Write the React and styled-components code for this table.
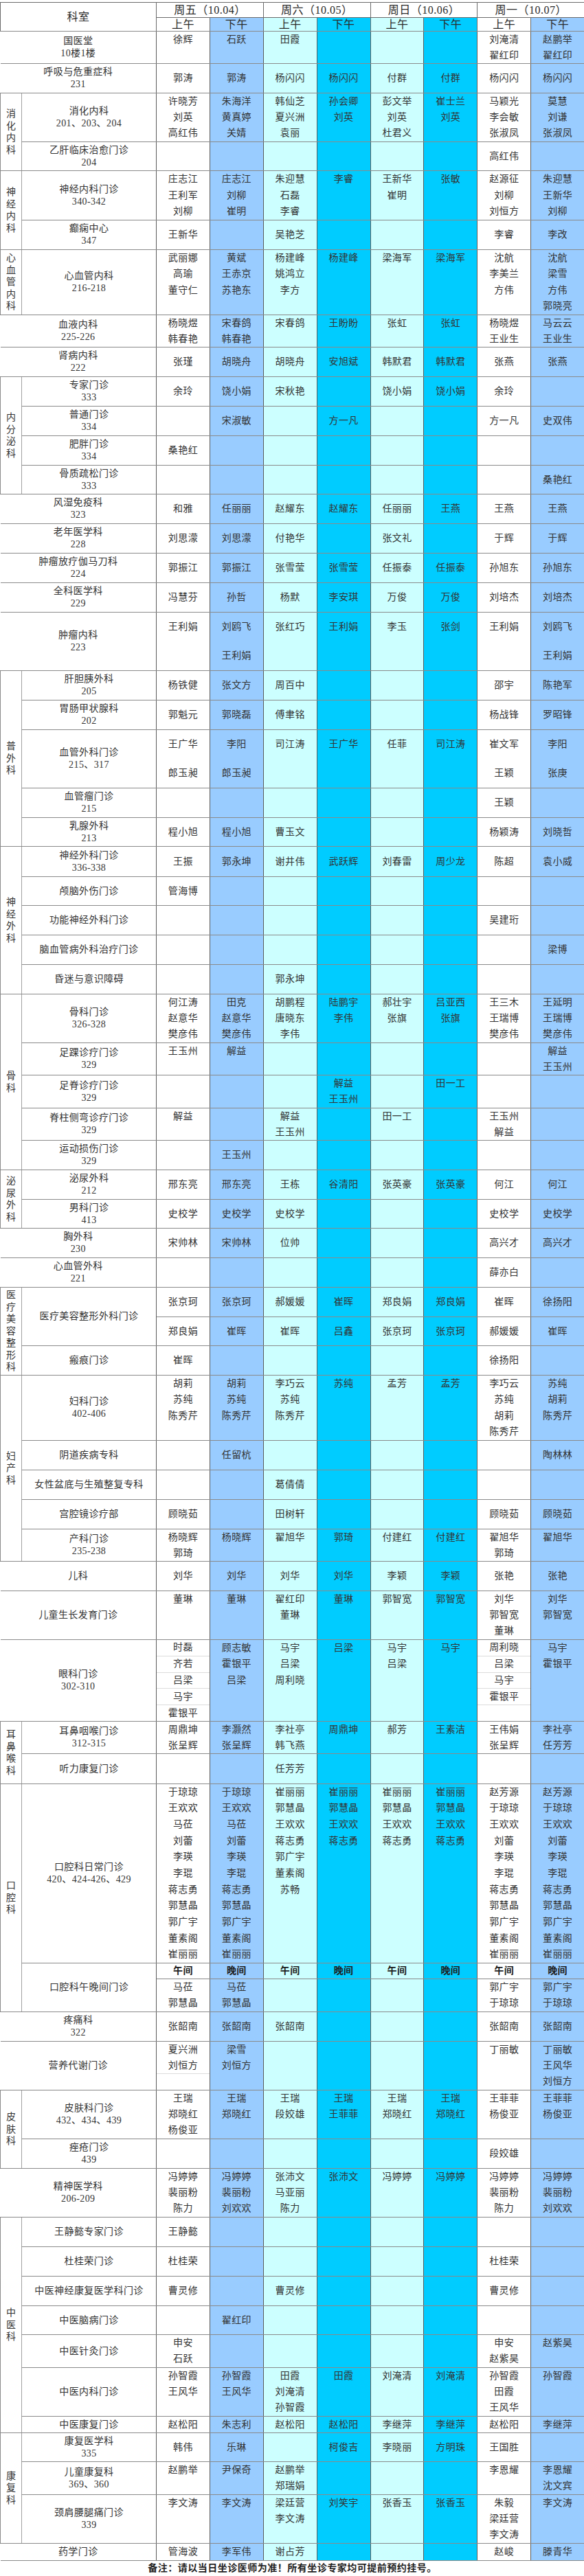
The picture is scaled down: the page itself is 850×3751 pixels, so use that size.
import React from "react";
import styled, { createGlobalStyle } from "styled-components";

const GlobalStyle = createGlobalStyle`
  body {
    margin: 0;
    background: #ffffff;
  }
`;

// column backgrounds: 周五上/下, 周六上/下, 周日上/下, 周一上/下
const COLORS = ["#ffffff", "#99ccff", "#ccffff", "#00ccff", "#ccffff", "#00ccff", "#ffffff", "#99ccff"];
const DAYS = ["周五（10.04）", "周六（10.05）", "周日（10.06）", "周一（10.07）"];

const sections = [
  { name: "国医堂", room: "10楼1楼", h: 47, n: 2, c: ["徐辉", "石跃", "田霞", "", "", "", "刘淹清/翟红印", "赵鹏举/翟红印"] },
  { name: "呼吸与危重症科", room: "231", h: 43, n: 1, c: ["郭涛", "郭涛", "杨闪闪", "杨闪闪", "付群", "付群", "杨闪闪", "杨闪闪"] },
  {
    group: "消化内科",
    rows: [
      { name: "消化内科", room: "201、203、204", h: 71, n: 3, c: ["许晓芳/刘英/高红伟", "朱海洋/黄真婷/关婧", "韩仙芝/夏兴洲/袁丽", "孙会卿/刘英", "彭文举/刘英/杜君义", "崔士兰/刘英", "马颖光/李会敏/张淑凤", "莫慧/刘谦/张淑凤"] },
      { name: "乙肝临床治愈门诊", room: "204", h: 42, n: 1, c: ["", "", "", "", "", "", "高红伟", ""] },
    ],
  },
  {
    group: "神经内科",
    rows: [
      { name: "神经内科门诊", room: "340-342", h: 72, n: 3, c: ["庄志江/王利军/刘柳", "庄志江/刘柳/崔明", "朱迎慧/石磊/李睿", "李睿", "王新华/崔明", "张敏", "赵源征/刘柳/刘恒方", "朱迎慧/王新华/刘柳"] },
      { name: "癫痫中心", room: "347", h: 43, n: 1, c: ["王新华", "", "吴艳芝", "", "", "", "李睿", "李改"] },
    ],
  },
  {
    group: "心血管内科",
    rows: [
      { name: "心血管内科", room: "216-218", h: 95, n: 4, c: ["武丽娜/高瑜/董守仁", "黄斌/王赤京/苏艳东", "杨建峰/姚鸿立/李方", "杨建峰", "梁海军", "梁海军", "沈航/李美兰/方伟", "沈航/梁雪/方伟/郭晓亮"] },
    ],
  },
  { name: "血液内科", room: "225-226", h: 47, n: 2, c: ["杨晓煜/韩春艳", "宋春鸽/韩春艳", "宋春鸽", "王盼盼", "张虹", "张虹", "杨晓煜/王业生", "马云云/王业生"] },
  { name: "肾病内科", room: "222", h: 43, n: 1, c: ["张瑾", "胡晓舟", "胡晓舟", "安旭斌", "韩默君", "韩默君", "张燕", "张燕"] },
  {
    group: "内分泌科",
    rows: [
      { name: "专家门诊", room: "333", h: 43, n: 1, c: ["余玲", "饶小娟", "宋秋艳", "", "饶小娟", "饶小娟", "余玲", ""] },
      { name: "普通门诊", room: "334", h: 43, n: 1, c: ["", "宋淑敏", "", "方一凡", "", "", "方一凡", "史双伟"] },
      { name: "肥胖门诊", room: "334", h: 43, n: 1, c: ["桑艳红", "", "", "", "", "", "", ""] },
      { name: "骨质疏松门诊", room: "333", h: 42, n: 1, c: ["", "", "", "", "", "", "", "桑艳红"] },
    ],
  },
  { name: "风湿免疫科", room: "323", h: 43, n: 1, c: ["和雅", "任丽丽", "赵耀东", "赵耀东", "任丽丽", "王燕", "王燕", "王燕"] },
  { name: "老年医学科", room: "228", h: 43, n: 1, c: ["刘思濛", "刘思濛", "付艳华", "", "张文礼", "", "于辉", "于辉"] },
  { name: "肿瘤放疗伽马刀科", room: "224", h: 43, n: 1, c: ["郭振江", "郭振江", "张雪莹", "张雪莹", "任振泰", "任振泰", "孙旭东", "孙旭东"] },
  { name: "全科医学科", room: "229", h: 43, n: 1, c: ["冯慧芬", "孙哲", "杨默", "李安琪", "万俊", "万俊", "刘培杰", "刘培杰"] },
  { name: "肿瘤内科", room: "223", h: 85, n: 2, c: ["王利娟", "刘鸥飞/王利娟", "张红巧", "王利娟", "李玉", "张剑", "王利娟", "刘鸥飞/王利娟"] },
  {
    group: "普外科",
    rows: [
      { name: "肝胆胰外科", room: "205", h: 43, n: 1, c: ["杨铁健", "张文方", "周百中", "", "", "", "邵宇", "陈艳军"] },
      { name: "胃肠甲状腺科", room: "202", h: 43, n: 1, c: ["郭魁元", "郭晓磊", "傅聿铭", "", "", "", "杨战锋", "罗昭锋"] },
      { name: "血管外科门诊", room: "215、317", h: 85, n: 2, c: ["王广华/郎玉昶", "李阳/郎玉昶", "司江涛", "王广华", "任菲", "司江涛", "崔文军/王颖", "李阳/张庚"] },
      { name: "血管瘤门诊", room: "215", h: 43, n: 1, c: ["", "", "", "", "", "", "王颖", ""] },
      { name: "乳腺外科", room: "213", h: 42, n: 1, c: ["程小旭", "程小旭", "曹玉文", "", "", "", "杨颖涛", "刘晓哲"] },
    ],
  },
  {
    group: "神经外科",
    rows: [
      { name: "神经外科门诊", room: "336-338", h: 44, n: 1, c: ["王振", "郭永坤", "谢井伟", "武跃辉", "刘春雷", "周少龙", "陈超", "袁小威"] },
      { name: "颅脑外伤门诊", h: 42, n: 1, c: ["管海博", "", "", "", "", "", "", ""] },
      { name: "功能神经外科门诊", h: 43, n: 1, c: ["", "", "", "", "", "", "吴建珩", ""] },
      { name: "脑血管病外科治疗门诊", h: 43, n: 1, c: ["", "", "", "", "", "", "", "梁博"] },
      { name: "昏迷与意识障碍", h: 43, n: 1, c: ["", "", "郭永坤", "", "", "", "", ""] },
    ],
  },
  {
    group: "骨科",
    rows: [
      { name: "骨科门诊", room: "326-328", h: 71, n: 3, c: ["何江涛/赵意华/樊彦伟", "田克/赵意华/樊彦伟", "胡鹏程/唐晓东/李伟", "陆鹏宇/李伟", "郝壮宇/张旗", "吕亚西/张旗", "王三木/王瑞博/樊彦伟", "王延明/王瑞博/樊彦伟"] },
      { name: "足踝诊疗门诊", room: "329", h: 47, n: 2, c: ["王玉州", "解益", "", "", "", "", "", "解益/王玉州"] },
      { name: "足脊诊疗门诊", room: "329", h: 48, n: 2, c: ["", "", "", "解益/王玉州", "", "田一工", "", ""] },
      { name: "脊柱侧弯诊疗门诊", room: "329", h: 47, n: 2, c: ["解益", "", "解益/王玉州", "", "田一工", "", "王玉州/解益", ""] },
      { name: "运动损伤门诊", room: "329", h: 43, n: 1, c: ["", "王玉州", "", "", "", "", "", ""] },
    ],
  },
  {
    group: "泌尿外科",
    rows: [
      { name: "泌尿外科", room: "212", h: 43, n: 1, c: ["邢东亮", "邢东亮", "王栋", "谷清阳", "张英豪", "张英豪", "何江", "何江"] },
      { name: "男科门诊", room: "413", h: 42, n: 1, c: ["史校学", "史校学", "史校学", "", "", "", "史校学", "史校学"] },
    ],
  },
  { name: "胸外科", room: "230", h: 43, n: 1, c: ["宋帅林", "宋帅林", "位帅", "", "", "", "高兴才", "高兴才"] },
  { name: "心血管外科", room: "221", h: 43, n: 1, c: ["", "", "", "", "", "", "薛亦白", ""] },
  {
    group: "医疗美容整形科",
    rows: [
      {
        name: "医疗美容整形外科门诊",
        subs: [
          { h: 43, n: 1, c: ["张京珂", "张京珂", "郝媛媛", "崔晖", "郑良娟", "郑良娟", "崔晖", "徐扬阳"] },
          { h: 42, n: 1, c: ["郑良娟", "崔晖", "崔晖", "吕鑫", "张京珂", "张京珂", "郝媛媛", "崔晖"] },
        ],
      },
      { name: "瘢痕门诊", h: 43, n: 1, c: ["崔晖", "", "", "", "", "", "徐扬阳", ""] },
    ],
  },
  {
    group: "妇产科",
    rows: [
      { name: "妇科门诊", room: "402-406", h: 95, n: 4, c: ["胡莉/苏纯/陈秀芹", "胡莉/苏纯/陈秀芹", "李巧云/苏纯/陈秀芹", "苏纯", "孟芳", "孟芳", "李巧云/苏纯/胡莉/陈秀芹", "苏纯/胡莉/陈秀芹"] },
      { name: "阴道疾病专科", h: 43, n: 1, c: ["", "任留杭", "", "", "", "", "", "陶林林"] },
      { name: "女性盆底与生殖整复专科", h: 43, n: 1, c: ["", "", "葛倩倩", "", "", "", "", ""] },
      { name: "宫腔镜诊疗部", h: 43, n: 1, c: ["顾晓茹", "", "田树轩", "", "", "", "顾晓茹", "顾晓茹"] },
      { name: "产科门诊", room: "235-238", h: 47, n: 2, c: ["杨晓辉/郭琦", "杨晓辉", "翟旭华", "郭琦", "付建红", "付建红", "翟旭华/郭琦", "翟旭华"] },
    ],
  },
  { name: "儿科", h: 43, n: 1, c: ["刘华", "刘华", "刘华", "刘华", "李颖", "李颖", "张艳", "张艳"] },
  { name: "儿童生长发育门诊", h: 71, n: 3, c: ["董琳", "董琳", "翟红印/董琳", "董琳", "郭智宽", "郭智宽", "刘华/郭智宽/董琳", "刘华/郭智宽"] },
  {
    name: "眼科门诊",
    room: "302-310",
    h: 119,
    n: 5,
    c: ["时磊/齐若/吕梁/马宇/霍银平", "顾志敏/霍银平/吕梁", "马宇/吕梁/周利晓", "吕梁", "马宇/吕梁", "马宇", "周利晓/吕梁/马宇/霍银平/", "马宇/霍银平"],
    sep: { 0: [0, 1, 2, 3], 6: [0, 1, 2, 3] },
  },
  {
    group: "耳鼻喉科",
    rows: [
      { name: "耳鼻咽喉门诊", room: "312-315", h: 47, n: 2, c: ["周鼎坤/张呈辉", "李灏然/张呈辉", "李社亭/韩飞燕", "周鼎坤", "郝芳", "王素洁", "王伟娟/张呈辉", "李社亭/任芳芳"] },
      { name: "听力康复门诊", h: 44, n: 1, c: ["", "", "任芳芳", "", "", "", "", ""] },
    ],
  },
  {
    group: "口腔科",
    rows: [
      {
        name: "口腔科日常门诊",
        room: "420、424-426、429",
        h: 261,
        n: 11,
        c: [
          "于琼琼/王欢欢/马莅/刘蕾/李瑛/李琨/蒋志勇/郭慧晶/郭广宇/董素阁/崔丽丽",
          "于琼琼/王欢欢/马莅/刘蕾/李瑛/李琨/蒋志勇/郭慧晶/郭广宇/董素阁/崔丽丽",
          "崔丽丽/郭慧晶/王欢欢/蒋志勇/郭广宇/董素阁/苏畅",
          "崔丽丽/郭慧晶/王欢欢/蒋志勇",
          "崔丽丽/郭慧晶/王欢欢/蒋志勇",
          "崔丽丽/郭慧晶/王欢欢/蒋志勇",
          "赵芳源/于琼琼/王欢欢/刘蕾/李瑛/李琨/蒋志勇/郭慧晶/郭广宇/董素阁/崔丽丽",
          "赵芳源/于琼琼/王欢欢/刘蕾/李瑛/李琨/蒋志勇/郭慧晶/郭广宇/董素阁/崔丽丽",
        ],
      },
      {
        name: "口腔科午晚间门诊",
        subs: [
          { h: 23, n: 1, bold: true, c: ["午间", "晚间", "午间", "晚间", "午间", "晚间", "午间", "晚间"] },
          { h: 48, n: 2, c: ["马莅/郭慧晶", "马莅/郭慧晶", "", "", "", "", "郭广宇/于琼琼", "郭广宇/于琼琼"] },
        ],
      },
    ],
  },
  { name: "疼痛科", room: "322", h: 43, n: 1, c: ["张韶南", "张韶南", "张韶南", "", "", "", "张韶南", "张韶南"] },
  { name: "营养代谢门诊", h: 71, n: 3, c: ["夏兴洲/刘恒方/", "梁雪/刘恒方", "", "", "", "", "丁丽敏", "丁丽敏/王风华/刘恒方"], sep: { 0: [1] } },
  {
    group: "皮肤科",
    rows: [
      { name: "皮肤科门诊", room: "432、434、439", h: 71, n: 3, c: ["王瑞/郑晓红/杨俊亚", "王瑞/郑晓红", "王瑞/段姣雄", "王瑞/王菲菲", "王瑞/郑晓红", "王瑞/郑晓红", "王菲菲/杨俊亚", "王菲菲/杨俊亚"] },
      { name: "痤疮门诊", room: "439", h: 43, n: 1, c: ["", "", "", "", "", "", "段姣雄", ""] },
    ],
  },
  { name: "精神医学科", room: "206-209", h: 71, n: 3, c: ["冯婷婷/裴丽粉/陈力", "冯婷婷/裴丽粉/刘欢欢", "张沛文/马亚丽/陈力", "张沛文", "冯婷婷", "冯婷婷", "冯婷婷/裴丽粉/陈力", "冯婷婷/裴丽粉/刘欢欢"] },
  {
    group: "中医科",
    rows: [
      { name: "王静懿专家门诊", h: 43, n: 1, c: ["王静懿", "", "", "", "", "", "", ""] },
      { name: "杜桂荣门诊", h: 43, n: 1, c: ["杜桂荣", "", "", "", "", "", "杜桂荣", ""] },
      { name: "中医神经康复医学科门诊", h: 43, n: 1, c: ["曹灵修", "", "曹灵修", "", "", "", "曹灵修", ""] },
      { name: "中医脑病门诊", h: 42, n: 1, c: ["", "翟红印", "", "", "", "", "", ""] },
      { name: "中医针灸门诊", h: 48, n: 2, c: ["申安/石跃", "", "", "", "", "", "申安/赵紫昊", "赵紫昊"] },
      { name: "中医内科门诊", h: 71, n: 3, c: ["孙智霞/王风华", "孙智霞/王风华", "田霞/刘淹清/孙智霞", "田霞", "刘淹清", "刘淹清", "孙智霞/田霞/王风华", "孙智霞"] },
      { name: "中医康复门诊", h: 24, n: 1, c: ["赵松阳", "朱志利", "赵松阳", "赵松阳", "李继萍", "李继萍", "赵松阳", "李继萍"] },
    ],
  },
  {
    group: "康复科",
    rows: [
      { name: "康复医学科", room: "335", h: 42, n: 1, c: ["韩伟", "乐琳", "", "柯俊吉", "李晓丽", "方明珠", "王国胜", ""] },
      { name: "儿童康复科", room: "369、360", h: 48, n: 2, c: ["赵鹏举", "尹保奇", "赵鹏举/郑瑞娟", "", "", "", "李恩耀", "李恩耀/沈文宾"] },
      { name: "颈肩腰腿痛门诊", room: "339", h: 71, n: 3, c: ["李文涛", "李文涛", "梁廷营/李文涛", "刘笑宇", "张香玉", "张香玉", "朱毅/梁廷营/李文涛", "李文涛"] },
    ],
  },
  { name: "药学门诊", h: 25, n: 1, c: ["管海波", "李军伟", "谢占芳", "", "", "", "赵峻", "滕青华"] },
];

const Page = styled.div`
  width: 850px;
  padding-top: 3px;
  background: #ffffff;
`;

const Table = styled.table`
  width: 850px;
  border-collapse: collapse;
  table-layout: fixed;
  font-family: "Liberation Serif", "Noto Sans CJK SC", serif;
  color: #2e2e2e;
`;

const Col = styled.col`
  width: ${(p) => p.$w}px;
`;

const HeadRow = styled.tr`
  height: ${(p) => p.$h}px;
`;

const HeadCell = styled.th`
  padding: 0;
  font-weight: normal;
  font-size: 16px;
  line-height: 1;
  letter-spacing: 0.5px;
  text-align: center;
  color: #2a2a2a;
  background: ${(p) => p.$bg || "#ffffff"};
  border: 1px solid #6a6a6a;
  border-bottom-color: ${(p) => (p.$strong ? "#8a8a8a" : "#6a6a6a")};
`;

const GroupCell = styled.td`
  padding: 0;
  vertical-align: middle;
  text-align: center;
  border: 1px solid #8a8a8a;
  border-right-color: #a0a0a0;
`;

const GroupLabel = styled.div`
  display: flex;
  flex-direction: column;
  align-items: center;
  font-size: 14px;
  line-height: 17.5px;
  color: #333333;
`;

const NameCell = styled.td`
  padding: 0;
  vertical-align: middle;
  text-align: center;
  font-size: 14px;
  line-height: 18px;
  letter-spacing: 0.4px;
  color: #333333;
  border-top: 1px solid #8a8a8a;
  border-bottom: 1px solid #8a8a8a;
  border-right: 1px solid #5a5a5a;
`;

const DataCell = styled.td`
  padding: 0;
  vertical-align: top;
  background: ${(p) => p.$bg};
  border-top: 1px solid #8a8a8a;
  border-bottom: 1px solid #8a8a8a;
  border-left: 1px solid #5a5a5a;
  border-right: 1px solid #5a5a5a;
`;

const Slots = styled.div`
  display: flex;
  flex-direction: column;
  height: ${(p) => p.$h}px;
  overflow: hidden;
`;

const Slot = styled.div`
  flex: 1 1 0;
  min-height: 0;
  display: flex;
  align-items: center;
  justify-content: center;
  font-size: 14px;
  line-height: 1;
  letter-spacing: 0.4px;
  font-weight: ${(p) => (p.$bold ? "bold" : "normal")};
  color: ${(p) => (p.$bold ? "#1e1e1e" : "#333333")};
  border-bottom: ${(p) => (p.$sep ? "1px solid #dcdcdc" : "none")};
  white-space: nowrap;
`;

const NoteCell = styled.td`
  padding: 0;
  height: 22px;
  line-height: 1;
  text-align: center;
  font-size: 14px;
  font-weight: bold;
  letter-spacing: 0.5px;
  color: #1e1e1e;
  border-top: 1px solid #8a8a8a;
`;

function Group({ text }) {
  return (
    <GroupLabel>
      {text.split("").map((ch, i) => (
        <span key={i}>{ch}</span>
      ))}
    </GroupLabel>
  );
}

function Cells({ row }) {
  return row.c.map((v, i) => {
    const names = v.split("/");
    const seps = (row.sep && row.sep[i]) || [];
    const slots = [];
    for (let k = 0; k < row.n; k++) {
      slots.push(
        <Slot key={k} $bold={row.bold} $sep={seps.includes(k)}>
          {names[k] || ""}
        </Slot>
      );
    }
    return (
      <DataCell key={i} $bg={COLORS[i]}>
        <Slots $h={row.h - 1}>{slots}</Slots>
      </DataCell>
    );
  });
}

function buildRows() {
  const out = [];
  const push = (r, groupCell, wide) => {
    const subs = r.subs || [r];
    subs.forEach((s, k) => {
      out.push(
        <tr key={out.length}>
          {k === 0 && groupCell}
          {k === 0 && (
            <NameCell colSpan={wide ? 2 : 1} rowSpan={subs.length}>
              <div>{r.name}</div>
              {r.room && <div>{r.room}</div>}
            </NameCell>
          )}
          <Cells row={s} />
        </tr>
      );
    });
  };
  sections.forEach((sec) => {
    if (sec.group) {
      const span = sec.rows.reduce((a, r) => a + (r.subs ? r.subs.length : 1), 0);
      sec.rows.forEach((r, ri) =>
        push(
          r,
          ri === 0 ? (
            <GroupCell rowSpan={span}>
              <Group text={sec.group} />
            </GroupCell>
          ) : null,
          false
        )
      );
    } else {
      push(sec, null, true);
    }
  });
  return out;
}

export default function App() {
  return (
    <Page>
      <GlobalStyle />
      <Table>
        <colgroup>
          <Col $w={31} />
          <Col $w={196} />
          {COLORS.map((_, i) => (
            <Col key={i} $w={77.875} />
          ))}
        </colgroup>
        <tbody>
          <HeadRow $h={22}>
            <HeadCell colSpan={2} rowSpan={2} $strong>
              科室
            </HeadCell>
            {DAYS.map((d) => (
              <HeadCell key={d} colSpan={2}>
                {d}
              </HeadCell>
            ))}
          </HeadRow>
          <HeadRow $h={20}>
            {COLORS.map((bg, i) => (
              <HeadCell key={i} $bg={bg} $strong>
                {i % 2 === 0 ? "上午" : "下午"}
              </HeadCell>
            ))}
          </HeadRow>
          {buildRows()}
          <tr>
            <NoteCell colSpan={10}>备注：请以当日坐诊医师为准！所有坐诊专家均可提前预约挂号。</NoteCell>
          </tr>
        </tbody>
      </Table>
    </Page>
  );
}
